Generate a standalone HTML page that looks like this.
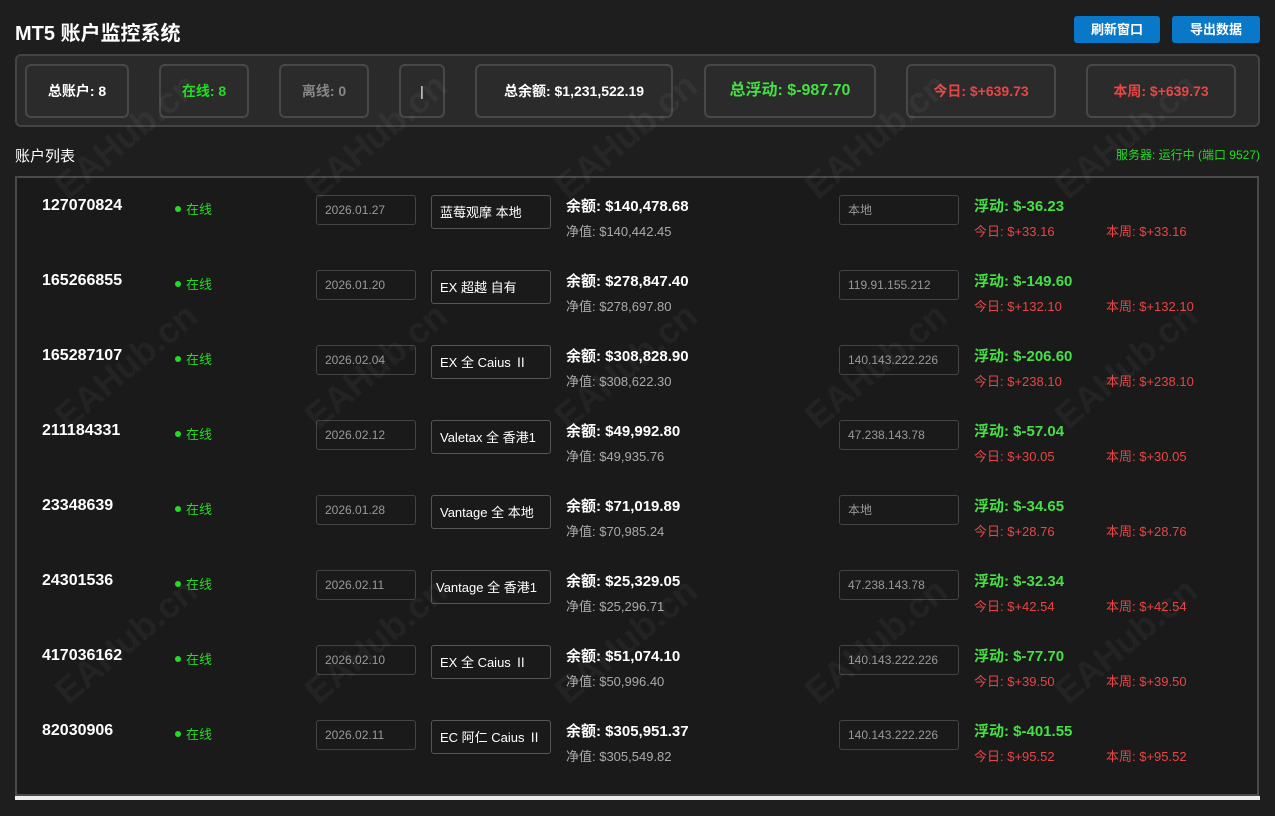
<!DOCTYPE html>
<html><head><meta charset="utf-8"><style>
*{margin:0;padding:0;box-sizing:border-box}
body{width:1275px;height:816px;background:#1e1e1e;font-family:"Liberation Sans","Noto Sans CJK SC",sans-serif;color:#fff;position:relative;overflow:hidden}
.a{position:absolute;white-space:nowrap}
h1{position:absolute;left:15px;top:17px;font-size:20px;font-weight:bold}
.btn{position:absolute;top:16px;height:27px;background:#0a78c8;border-radius:3px;font-size:13px;font-weight:bold;text-align:center;line-height:27px}
.panel{position:absolute;left:15px;top:54px;width:1245px;height:73px;background:#2a2a2a;border:2px solid #444;border-radius:6px}
.card{position:absolute;top:64px;height:54px;border:2px solid #484848;border-radius:6px;background:#2b2b2b;font-size:14px;font-weight:bold;text-align:center;line-height:50px}
.list{position:absolute;left:15px;top:176px;width:1244px;height:620px;border:2px solid #4a4a4a;background:#1a1a1a}
.bar{position:absolute;left:15px;top:796px;width:1245px;height:4px;background:#eee}
.row{position:absolute;left:0;width:1275px;height:75px}
.acc{left:42px;top:21px;font-size:16px;font-weight:bold}
.on{left:175px;top:23px;font-size:13px;color:#22dd22}
.on:before{content:"";display:inline-block;width:6px;height:6px;border-radius:50%;background:#22dd22;margin-right:5px;vertical-align:2px}
.box{position:absolute;border:1px solid #444;border-radius:3px;font-size:12px;color:#999;padding-left:8px;line-height:28px;top:19px;height:30px;overflow:hidden;white-space:nowrap}
.nm{left:431px;width:120px;height:34px;line-height:34px;color:#fff;font-size:13px;border-color:#555}
.bal{left:566px;top:19px;font-size:15px;font-weight:bold}
.eq{left:566px;top:45px;font-size:13px;color:#aaa}
.fl{left:974px;top:19px;font-size:15px;font-weight:bold;color:#44e044}
.td{left:974px;top:45px;font-size:13px;color:#e84545}
.wk{left:1106px;top:45px;font-size:13px;color:#e84545}
.wm{position:absolute;font-size:36px;font-weight:bold;color:rgba(255,255,255,0.045);transform:rotate(-40deg);white-space:nowrap}
</style></head><body>
<h1>MT5 账户监控系统</h1>
<div class="btn" style="left:1074px;width:86px">刷新窗口</div>
<div class="btn" style="left:1172px;width:88px">导出数据</div>
<div class="panel"></div>
<div class="card" style="left:25px;width:104px">总账户: 8</div>
<div class="card" style="left:159px;width:90px;color:#22dd22">在线: 8</div>
<div class="card" style="left:279px;width:90px;color:#888">离线: 0</div>
<div class="card" style="left:399px;width:46px;font-weight:normal">|</div>
<div class="card" style="left:475px;width:198px">总余额: $1,231,522.19</div>
<div class="card" style="left:704px;width:172px;color:#44e044;font-size:16px">总浮动: $-987.70</div>
<div class="card" style="left:906px;width:150px;color:#e84545">今日: $+639.73</div>
<div class="card" style="left:1086px;width:150px;color:#e84545">本周: $+639.73</div>
<div class="a" style="left:15px;top:145px;font-size:15px">账户列表</div>
<div class="a" style="right:15px;top:146px;font-size:12px;color:#22dd22">服务器: 运行中 (端口 9527)</div>
<div class="list"></div>
<div class="bar"></div>

<div class="row" style="top:176px"><div class="a acc">127070824</div><div class="a on">在线</div><div class="box" style="left:316px;width:100px">2026.01.27</div><div class="box nm">蓝莓观摩 本地</div><div class="a bal">余额: $140,478.68</div><div class="a eq">净值: $140,442.45</div><div class="box" style="left:839px;width:120px">本地</div><div class="a fl">浮动: $-36.23</div><div class="a td">今日: $+33.16</div><div class="a wk">本周: $+33.16</div></div>
<div class="row" style="top:251px"><div class="a acc">165266855</div><div class="a on">在线</div><div class="box" style="left:316px;width:100px">2026.01.20</div><div class="box nm">EX 超越 自有</div><div class="a bal">余额: $278,847.40</div><div class="a eq">净值: $278,697.80</div><div class="box" style="left:839px;width:120px">119.91.155.212</div><div class="a fl">浮动: $-149.60</div><div class="a td">今日: $+132.10</div><div class="a wk">本周: $+132.10</div></div>
<div class="row" style="top:326px"><div class="a acc">165287107</div><div class="a on">在线</div><div class="box" style="left:316px;width:100px">2026.02.04</div><div class="box nm">EX 全 Caius Ⅱ</div><div class="a bal">余额: $308,828.90</div><div class="a eq">净值: $308,622.30</div><div class="box" style="left:839px;width:120px">140.143.222.226</div><div class="a fl">浮动: $-206.60</div><div class="a td">今日: $+238.10</div><div class="a wk">本周: $+238.10</div></div>
<div class="row" style="top:401px"><div class="a acc">211184331</div><div class="a on">在线</div><div class="box" style="left:316px;width:100px">2026.02.12</div><div class="box nm">Valetax 全 香港1</div><div class="a bal">余额: $49,992.80</div><div class="a eq">净值: $49,935.76</div><div class="box" style="left:839px;width:120px">47.238.143.78</div><div class="a fl">浮动: $-57.04</div><div class="a td">今日: $+30.05</div><div class="a wk">本周: $+30.05</div></div>
<div class="row" style="top:476px"><div class="a acc">23348639</div><div class="a on">在线</div><div class="box" style="left:316px;width:100px">2026.01.28</div><div class="box nm">Vantage 全 本地</div><div class="a bal">余额: $71,019.89</div><div class="a eq">净值: $70,985.24</div><div class="box" style="left:839px;width:120px">本地</div><div class="a fl">浮动: $-34.65</div><div class="a td">今日: $+28.76</div><div class="a wk">本周: $+28.76</div></div>
<div class="row" style="top:551px"><div class="a acc">24301536</div><div class="a on">在线</div><div class="box" style="left:316px;width:100px">2026.02.11</div><div class="box nm" style="padding-left:4px">Vantage 全 香港1</div><div class="a bal">余额: $25,329.05</div><div class="a eq">净值: $25,296.71</div><div class="box" style="left:839px;width:120px">47.238.143.78</div><div class="a fl">浮动: $-32.34</div><div class="a td">今日: $+42.54</div><div class="a wk">本周: $+42.54</div></div>
<div class="row" style="top:626px"><div class="a acc">417036162</div><div class="a on">在线</div><div class="box" style="left:316px;width:100px">2026.02.10</div><div class="box nm">EX 全 Caius Ⅱ</div><div class="a bal">余额: $51,074.10</div><div class="a eq">净值: $50,996.40</div><div class="box" style="left:839px;width:120px">140.143.222.226</div><div class="a fl">浮动: $-77.70</div><div class="a td">今日: $+39.50</div><div class="a wk">本周: $+39.50</div></div>
<div class="row" style="top:701px"><div class="a acc">82030906</div><div class="a on">在线</div><div class="box" style="left:316px;width:100px">2026.02.11</div><div class="box nm">EC 阿仁 Caius Ⅱ</div><div class="a bal">余额: $305,951.37</div><div class="a eq">净值: $305,549.82</div><div class="box" style="left:839px;width:120px">140.143.222.226</div><div class="a fl">浮动: $-401.55</div><div class="a td">今日: $+95.52</div><div class="a wk">本周: $+95.52</div></div>

<div class="wm" style="left:40px;top:115px">EAHub.cn</div>
<div class="wm" style="left:290px;top:115px">EAHub.cn</div>
<div class="wm" style="left:540px;top:115px">EAHub.cn</div>
<div class="wm" style="left:790px;top:115px">EAHub.cn</div>
<div class="wm" style="left:1040px;top:115px">EAHub.cn</div>
<div class="wm" style="left:40px;top:345px">EAHub.cn</div>
<div class="wm" style="left:290px;top:345px">EAHub.cn</div>
<div class="wm" style="left:540px;top:345px">EAHub.cn</div>
<div class="wm" style="left:790px;top:345px">EAHub.cn</div>
<div class="wm" style="left:1040px;top:345px">EAHub.cn</div>
<div class="wm" style="left:40px;top:620px">EAHub.cn</div>
<div class="wm" style="left:290px;top:620px">EAHub.cn</div>
<div class="wm" style="left:540px;top:620px">EAHub.cn</div>
<div class="wm" style="left:790px;top:620px">EAHub.cn</div>
<div class="wm" style="left:1040px;top:620px">EAHub.cn</div>
</body></html>
